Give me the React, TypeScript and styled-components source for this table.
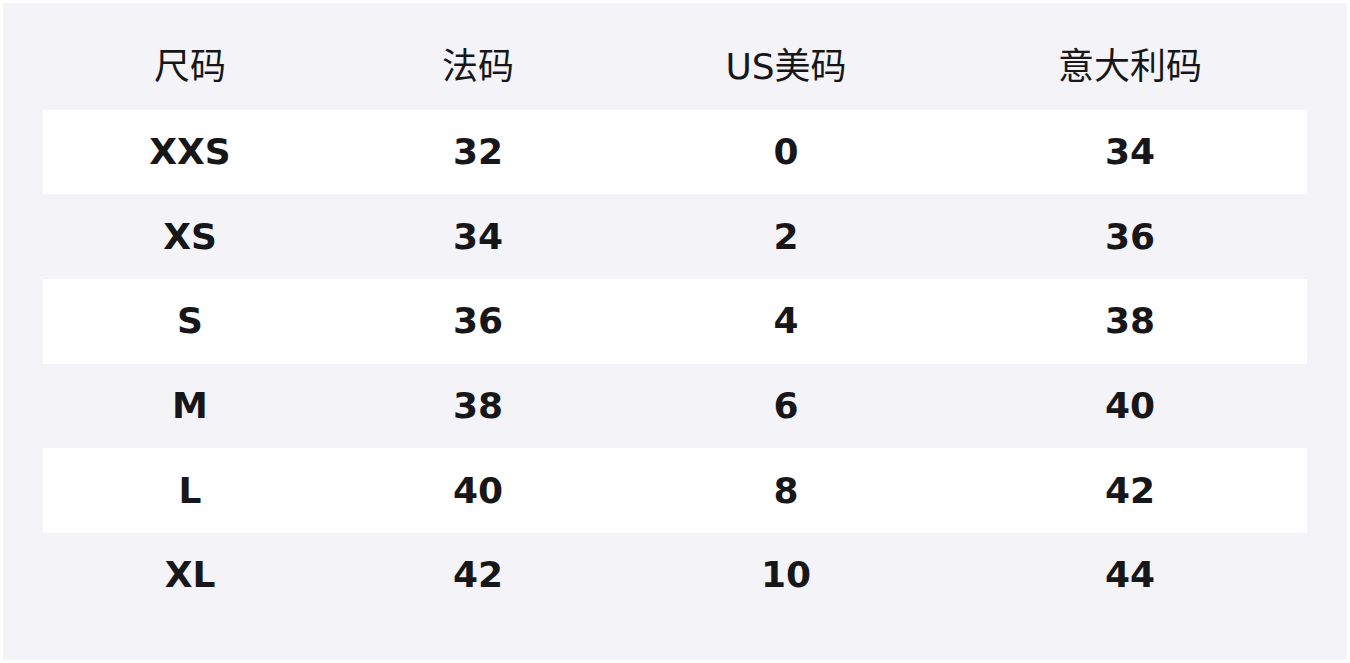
import React from "react";
import styled, { createGlobalStyle } from "styled-components";

const Global = createGlobalStyle`
  html, body { margin: 0; padding: 0; background: #ffffff; }
  body { font-family: "DejaVu Sans", "Noto Sans CJK SC", sans-serif; }
`;

const Panel = styled.div`
  margin: 3px;
  width: 1344px;
  height: 657px;
  box-sizing: border-box;
  background: #f3f3f8;
  padding: 22px 40px 0 40px;
  display: flex;
  flex-direction: column;
`;

const Row = styled.div<{ $striped?: boolean }>`
  display: grid;
  grid-template-columns: 294px 282px 334px 354px;
  height: 84.7px;
  align-items: center;
  background: ${(p) => (p.$striped ? "#ffffff" : "transparent")};
`;

const Cell = styled.div<{ $head?: boolean }>`
  text-align: center;
  font-size: 36px;
  color: #17171a;
  font-weight: ${(p) => (p.$head ? 400 : 700)};
  line-height: 1;
`;

const headers = ["尺码", "法码", "US美码", "意大利码"];
const rows = [
  ["XXS", "32", "0", "34"],
  ["XS", "34", "2", "36"],
  ["S", "36", "4", "38"],
  ["M", "38", "6", "40"],
  ["L", "40", "8", "42"],
  ["XL", "42", "10", "44"],
];

export default function App() {
  return (
    <>
      <Global />
      <Panel>
        <Row>
          {headers.map((h) => (
            <Cell $head key={h}>{h}</Cell>
          ))}
        </Row>
        {rows.map((r, i) => (
          <Row key={r[0]} $striped={i % 2 === 0}>
            {r.map((c, j) => (
              <Cell key={j}>{c}</Cell>
            ))}
          </Row>
        ))}
      </Panel>
    </>
  );
}
